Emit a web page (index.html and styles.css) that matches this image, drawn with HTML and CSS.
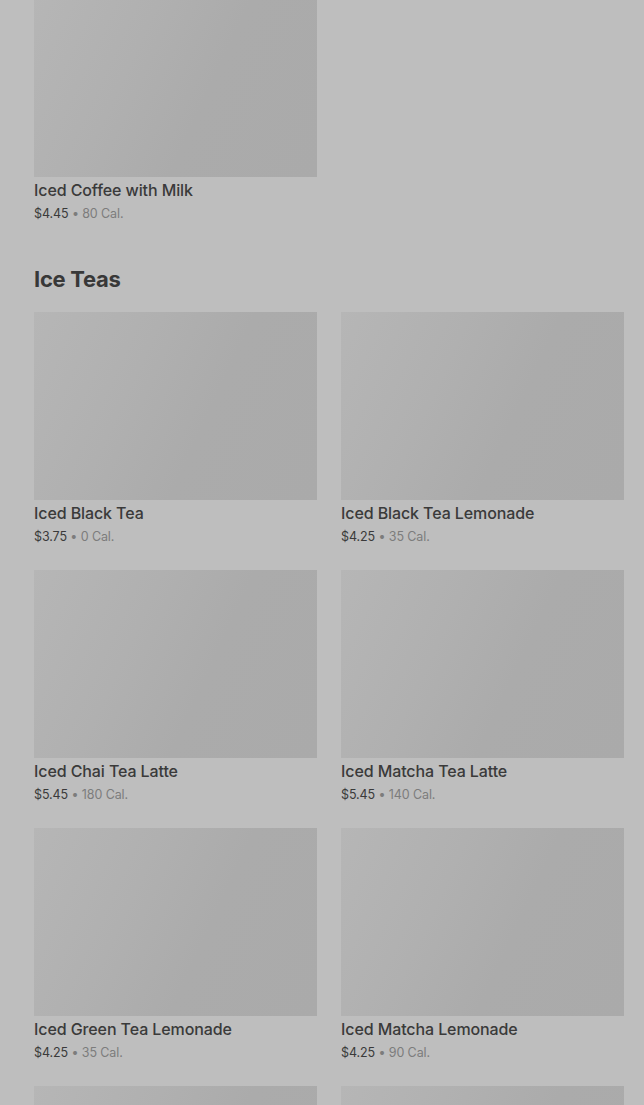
FILE: index.html
```html
<!DOCTYPE html>
<html lang="en">
<head>
    <meta charset="UTF-8">
    <meta name="viewport" content="width=device-width, initial-scale=1.0">
    <title>Menu</title>
    <link rel="stylesheet" href="styles.css">
</head>
<body>
    <div class="menu">
        <!-- previous category, scrolled partly out of view -->
        <section class="category">
            <div class="item-grid">
                <div class="item">
                    <div class="item-image"></div>
                    <div class="item-name">Iced Coffee with Milk</div>
                    <div class="item-meta">$4.45 <span class="cal">&bull; 80 Cal.</span></div>
                </div>
            </div>
        </section>

        <section class="category">
            <h2 class="category-title">Ice Teas</h2>
            <div class="item-grid">
                <div class="item">
                    <div class="item-image"></div>
                    <div class="item-name">Iced Black Tea</div>
                    <div class="item-meta">$3.75 <span class="cal">&bull; 0 Cal.</span></div>
                </div>
                <div class="item">
                    <div class="item-image"></div>
                    <div class="item-name">Iced Black Tea Lemonade</div>
                    <div class="item-meta">$4.25 <span class="cal">&bull; 35 Cal.</span></div>
                </div>
                <div class="item">
                    <div class="item-image"></div>
                    <div class="item-name">Iced Chai Tea Latte</div>
                    <div class="item-meta">$5.45 <span class="cal">&bull; 180 Cal.</span></div>
                </div>
                <div class="item">
                    <div class="item-image"></div>
                    <div class="item-name">Iced Matcha Tea Latte</div>
                    <div class="item-meta">$5.45 <span class="cal">&bull; 140 Cal.</span></div>
                </div>
                <div class="item">
                    <div class="item-image"></div>
                    <div class="item-name">Iced Green Tea Lemonade</div>
                    <div class="item-meta">$4.25 <span class="cal">&bull; 35 Cal.</span></div>
                </div>
                <div class="item">
                    <div class="item-image"></div>
                    <div class="item-name">Iced Matcha Lemonade</div>
                    <div class="item-meta">$4.25 <span class="cal">&bull; 90 Cal.</span></div>
                </div>
                <div class="item">
                    <div class="item-image"></div>
                </div>
                <div class="item">
                    <div class="item-image"></div>
                </div>
            </div>
        </section>
    </div>
</body>
</html>
```

FILE: styles.css
```css
/* page is dimmed by an overlay, so everything sits in greys */
body {
    margin: 0;
    background-color: #bebebe;
    font-family: Inter, "Noto Sans", sans-serif;
    color: #3a3a3a;
    overflow: hidden;
}
.menu {
    margin-top: -11px; /* scrolled a little past the first image */
    padding: 0 20px 0 34px;
}
.category {
    margin-bottom: 40px;
}
.category-title {
    margin: 0 0 17px;
    font-size: 22px;
    line-height: 32px;
    font-weight: 700;
    letter-spacing: -0.3px;
    color: #383838;
}
.item-grid {
    display: grid;
    grid-template-columns: 1fr 1fr;
    column-gap: 24px;
    row-gap: 24px;
}
.item-image {
    height: 188px;
    background: linear-gradient(115deg, #b6b6b6 0%, #b0b0b0 35%, #ababab 60%, #aaaaaa 100%);
}
.item-name {
    margin-top: 2px;
    font-size: 16px;
    line-height: 22px;
    font-weight: 500;
    letter-spacing: -0.1px;
}
.item-meta {
    margin-top: 4px;
    font-size: 12.5px;
    line-height: 18px;
    letter-spacing: -0.1px;
    color: #3a3a3a;
}
.cal {
    color: #7c7c7c;
}
```
